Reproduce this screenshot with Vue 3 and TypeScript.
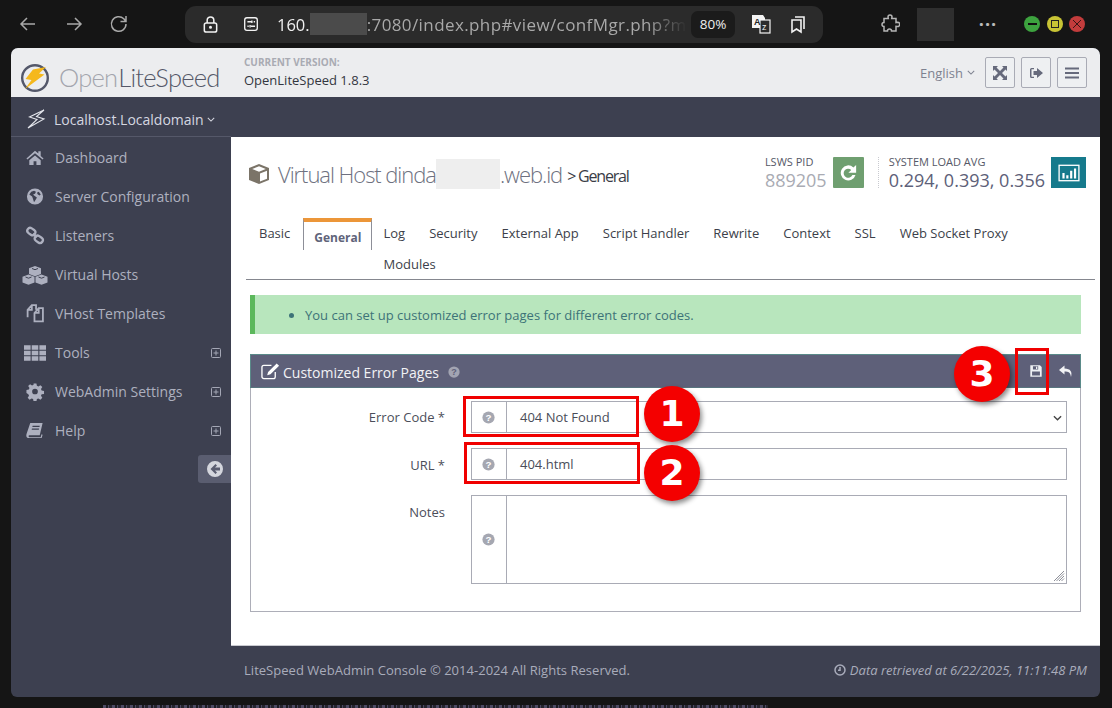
<script setup lang="ts">
interface NavItem { label: string; icon: string; more?: boolean }
const nav: NavItem[] = [
  { label: 'Dashboard', icon: 'home' },
  { label: 'Server Configuration', icon: 'globe' },
  { label: 'Listeners', icon: 'link' },
  { label: 'Virtual Hosts', icon: 'cubes' },
  { label: 'VHost Templates', icon: 'files' },
  { label: 'Tools', icon: 'grid', more: true },
  { label: 'WebAdmin Settings', icon: 'cog', more: true },
  { label: 'Help', icon: 'book', more: true },
]
const tabs = ['Basic', 'General', 'Log', 'Security', 'External App', 'Script Handler', 'Rewrite', 'Context', 'SSL', 'Web Socket Proxy', 'Modules']
</script>

<template>
  <div class="screen">
    <div class="toolbar">
      <svg class="tb back" viewBox="0 0 20 20"><path d="M17 10H3M9 4l-6 6 6 6" /></svg>
      <svg class="tb fwd" viewBox="0 0 20 20"><path d="M3 10h14M11 4l6 6-6 6" /></svg>
      <svg class="tb reload" viewBox="0 0 20 20"><path d="M17 10a7.300 7.300 0 1 1-2.200-5.200L17 7.500M17 2v5.500h-5.500" /></svg>
      <div class="urlbar">
        <svg class="ub lock" viewBox="0 0 20 20"><rect x="3.500" y="8.500" width="13" height="9.500" rx="2" /><path d="M6.500 8.500V5.500a3.500 3.500 0 0 1 7 0v3" /><circle cx="10" cy="13" r=".8" /></svg>
        <svg class="ub site" viewBox="0 0 20 20"><rect x="3" y="3" width="14" height="14" rx="2.500" /><path d="M6 7.500h5M13 7.500h1.500M6 12.500h1.500M10 12.500h4.500M11 6v3M9 11v3" /></svg>
        <div class="url"><span class="host">160.</span><span class="url-hide"></span><span class="path">:7080/index.php#view/confMgr.php?m</span></div>
        <div class="zoom-pill">80%</div>
        <svg class="ub trans" viewBox="0 0 22 22"><path class="solid" d="M2 2h11l2 3v10H2z" /><rect x="10" y="7" width="10" height="13" class="hollow" /><text x="4" y="12" class="ta">A</text><text x="12" y="17" class="tz">z</text></svg>
        <svg class="ub marks" viewBox="0 0 20 20"><path d="M4 6h9v12l-4.500-3L4 18zM7 3h9v12" /></svg>
      </div>
      <svg class="puzzle" viewBox="0 0 20 20"><path d="M8 3a2 2 0 0 1 4 0l-.3 1.500H16v4l1.500-.3a2.200 2.200 0 0 1 0 4.400L16 12.300V17h-4.500a2 2 0 0 0-4 0H4v-4.500a2 2 0 0 1 0-4V4.500h4.300z" /></svg>
      <div class="avatar"></div>
      <div class="dots">···</div>
      <div class="lights">
        <span class="light green"><i class="dash"></i></span>
        <span class="light yellow"><i class="sq"></i></span>
        <span class="light red"><svg viewBox="0 0 16 16"><path d="M4 4l8 8M12 4l-8 8" /></svg></span>
      </div>
    </div>

    <div class="window">
      <header class="head">
        <div class="logo">
          <svg class="logo-mark" viewBox="0 0 30 30">
            <circle cx="15" cy="15" r="12.800" fill="none" stroke="#54586a" stroke-width="2.400" />
            <path d="M13 6.500 26 4l-7 6.500 5.500 1L5 26l6.500-9L5.500 16z" fill="#f5b81c" />
          </svg>
          <span class="logo-text"><span class="open">Open</span><span class="lite">LiteSpeed</span></span>
        </div>
        <div class="version">
          <div class="v-label">CURRENT VERSION:</div>
          <div class="v-value">OpenLiteSpeed 1.8.3</div>
        </div>
        <div class="head-right">
          <span class="lang">English <svg class="chev" viewBox="0 0 10 6"><path d="M1 1l4 4 4-4" /></svg></span>
          <button class="hbtn"><svg viewBox="0 0 16 16"><path d="M1 1h5L4.500 2.500 8 6l3.500-3.500L10 1h5v5l-1.500-1.500L10 8l3.500 3.500L15 10v5h-5l1.500-1.500L8 10l-3.500 3.500L6 15H1v-5l1.500 1.500L6 8 2.500 4.500 1 6z" /></svg></button>
          <button class="hbtn"><svg viewBox="0 0 16 16"><path d="M6 3H3.500A1.500 1.500 0 0 0 2 4.500v7A1.500 1.500 0 0 0 3.500 13H6v-1.300H3.500V4.300H6z" /><path d="M5.500 6H9V3l6 5-6 5v-3H5.500z" /></svg></button>
          <button class="hbtn"><svg viewBox="0 0 16 16"><path d="M1 2.500h14v2H1zM1 7h14v2H1zM1 11.500h14v2H1z" /></svg></button>
        </div>
      </header>

      <div class="brandbar">
        <div class="brand">
          <svg class="brand-ico" viewBox="0 0 20 20"><path d="M18 1 3.500 8l7.500 2.500L2 19l16-9-7.500-2.500z" fill="none" stroke="#e2e4ea" stroke-width="1.100" /></svg>
          <span>Localhost.Localdomain</span>
          <svg class="chev light-chev" viewBox="0 0 10 6"><path d="M1 1l4 4 4-4" /></svg>
        </div>
      </div>

      <div class="main">
        <aside class="side">
          <nav class="nav">
            <div v-for="n in nav" :key="n.label" class="nav-item">
              <span class="nav-ico">
                <svg v-if="n.icon === 'home'" viewBox="0 0 20 20"><path d="M10 3 1 11l1 1.200L10 5.500l8 6.700 1-1.200-3-2.700V3.500h-2.500v2.300zM4 13l6-5 6 5v5h-4.500v-4h-3v4H4z" /></svg>
                <svg v-else-if="n.icon === 'globe'" viewBox="0 0 20 20"><path fill-rule="evenodd" d="M10 1.500a8.500 8.500 0 1 1 0 17 8.500 8.500 0 0 1 0-17zM6 5 4 8l3 2 1 3 1 3 2-3 1-2-3-2-1-1 2-1 1-2-2-1zm8 0-2 1 1 2 2 1 1-1z" /></svg>
                <svg v-else-if="n.icon === 'link'" viewBox="0 0 20 20" class="stroke heavy"><rect x="1.500" y="2.800" width="9" height="6" rx="3" transform="rotate(35 6 6)" /><rect x="9.500" y="11" width="9" height="6" rx="3" transform="rotate(35 14 14)" /><path d="M8 8l4 4" /></svg>
                <svg v-else-if="n.icon === 'cubes'" class="wide" viewBox="0 0 26 20"><path d="m13 1 6 2.300V9l-6 2.300L7 9V3.300z" /><path d="m6.500 9.500 6 2.300v5.700l-6 2.300-6-2.300v-5.700z" /><path d="m19.500 9.500 6 2.300v5.700l-6 2.300-6-2.300v-5.700z" /><path class="cut" d="m10 3.500 3 1.200 3-1.200M3.500 12l3 1.200 3-1.200M16.500 12l3 1.200 3-1.200" /></svg>
                <svg v-else-if="n.icon === 'files'" viewBox="1.500 1.500 17 18" class="stroke"><path d="M3 14V7l4-4.500h4V7M9.500 18V10l4-4.500h4V18zM7 2.500V7H3M13.500 5.500V10h-4" /></svg>
                <svg v-else-if="n.icon === 'grid'" class="grid" viewBox="0 3 20 14"><path d="M0 3h6v4H0zM7 3h6v4H7zM14 3h6v4h-6zM0 8h6v4H0zM7 8h6v4H7zM14 8h6v4h-6zM0 13h6v4H0zM7 13h6v4H7zM14 13h6v4h-6z" /></svg>
                <svg v-else-if="n.icon === 'cog'" viewBox="0 0 20 20"><path fill-rule="evenodd" d="M8.500 1.500h3l.5 2.500 1.600.7 2.100-1.400 2 2-1.400 2.100.7 1.600 2.500.5v3l-2.500.5-.7 1.600 1.400 2.100-2 2-2.100-1.400-1.600.7-.5 2.500h-3l-.5-2.500-1.600-.7-2.100 1.400-2-2 1.400-2.100-.7-1.600L1 11.500v-3l2.500-.5.7-1.600-1.400-2.100 2-2 2.100 1.400 1.600-.7zM10 7a3 3 0 1 0 0 6 3 3 0 0 0 0-6z" /></svg>
                <svg v-else viewBox="0 0 20 20"><path d="M5 2h13l-3 13H4c-1 0-1 2 0 2h12l.8-3 1.200.500-1 3.500H3c-2 0-2.500-2-2-4zm2.500 3-.3 1.300h7.500L15 5zm-.7 3-.3 1.300H14L14.300 8z" /></svg>
              </span>
              <span class="nav-label">{{ n.label }}</span>
              <svg v-if="n.more" class="plus" viewBox="0 0 10 10"><rect x=".5" y=".5" width="9" height="9" rx="1" /><path d="M2.500 5h5M5 2.500v5" /></svg>
            </div>
          </nav>
          <div class="collapse-row">
            <div class="collapse">
              <svg viewBox="0 0 16 16"><path fill-rule="evenodd" d="M8 0a8 8 0 1 1 0 16A8 8 0 0 1 8 0zm.5 3L3.500 8l5 5 1.500-1.500L8 9.500h5v-3H8L10 4.500z" /></svg>
            </div>
          </div>
        </aside>

        <div class="content">
          <section class="body">
            <div class="titlerow">
              <h1 class="title">
                <svg class="cube" viewBox="0 0 22 22"><path d="M11 1 21 5v12l-10 4-10-4V5z" fill="#7b7468" /><path d="M11 3.200 17.800 6 11 8.700 4.200 6z" fill="#fff" /><path d="M12 10.500 19 7.700v8l-7 2.900z" fill="#fff" /></svg>
                <span>Virtual Host dinda</span><span class="title-hide"></span><span>.web.id</span>
                <small>&gt; General</small>
              </h1>
              <div class="stats">
                <div class="stat">
                  <div class="s-label">LSWS PID</div>
                  <div class="s-value pid">889205</div>
                </div>
                <button class="sbtn green"><svg viewBox="0 0 16 16"><path d="M14 9.500A6 6 0 1 1 12.300 3.500L14.500 1.500V7.800H8.300l2.300-2.300A3.600 3.600 0 1 0 11.500 9.500z" /></svg></button>
                <div class="stat load">
                  <div class="s-label">SYSTEM LOAD AVG</div>
                  <div class="s-value">0.294, 0.393, 0.356</div>
                </div>
                <button class="sbtn teal"><svg viewBox="0 0 20 16"><rect x="1" y="1" width="18" height="14" fill="none" stroke="#fff" stroke-width="1.200" /><path d="M4 8h2v5H4zM7.500 10h2v3h-2zM11 6h2v7h-2zM14.500 4h2v9h-2z" /></svg></button>
              </div>
            </div>

            <ul class="tabs">
              <li v-for="t in tabs" :key="t" :class="['tab', { active: t === 'General' }]">{{ t }}</li>
            </ul>

            <div class="alert">
              <ul><li>You can set up customized error pages for different error codes.</li></ul>
            </div>

            <div class="panel">
              <div class="panel-head">
                <svg class="edit" viewBox="0 0 20 18"><path d="M15 10v5a2 2 0 0 1-2 2H3a2 2 0 0 1-2-2V5a2 2 0 0 1 2-2h8" fill="none" stroke="#fff" stroke-width="1.400" /><path d="M16.500 1 19 3.500 10 12.500l-3.500 1 1-3.500z" fill="#fff" /></svg>
                <span class="panel-title">Customized Error Pages</span>
                <svg class="qm head-qm" viewBox="0 0 16 16"><circle cx="8" cy="8" r="7.500" /><text x="8" y="12" class="qm-t">?</text></svg>
                <div class="panel-actions">
                  <svg class="save" viewBox="0 0 16 16"><path fill-rule="evenodd" d="M1.500 1.500h11l2 2v11h-13zm3 1.200v3.600h6V2.700zM8 3.200h1.500v2.500H8zM3.500 8.500v4.700h9V8.500z" /></svg>
                  <svg class="undo" viewBox="0 0 16 16"><path d="M6.500 2.500 1 7l5.500 4.500V8.500c4 0 6 1 6.500 5.500 1.500-5-.5-8.500-6.500-8.500z" /></svg>
                </div>
              </div>
              <div class="panel-body">
                <div class="row">
                  <label class="lbl">Error Code *</label>
                  <div class="field">
                    <span class="addon"><svg class="qm" viewBox="0 0 16 16"><circle cx="8" cy="8" r="7.500" /><text x="8" y="12" class="qm-t">?</text></svg></span>
                    <div class="val select">404 Not Found<svg class="sel-chev" viewBox="0 0 10 6"><path d="M1 1l4 4 4-4" /></svg></div>
                  </div>
                </div>
                <div class="row">
                  <label class="lbl url-lbl">URL *</label>
                  <div class="field">
                    <span class="addon"><svg class="qm" viewBox="0 0 16 16"><circle cx="8" cy="8" r="7.500" /><text x="8" y="12" class="qm-t">?</text></svg></span>
                    <div class="val">404.html</div>
                  </div>
                </div>
                <div class="row tall">
                  <label class="lbl">Notes</label>
                  <div class="field">
                    <span class="addon"><svg class="qm" viewBox="0 0 16 16"><circle cx="8" cy="8" r="7.500" /><text x="8" y="12" class="qm-t">?</text></svg></span>
                    <div class="val area"><svg class="grip" viewBox="0 0 12 12"><path d="M11 1 1 11M11 3.500 3.500 11M11 6 6 11M11 8.500 8.500 11" /></svg></div>
                  </div>
                </div>
              </div>
            </div>
          </section>
          <footer class="foot">
            <span>LiteSpeed WebAdmin Console © 2014-2024 All Rights Reserved.</span>
            <span class="retrieved"><svg viewBox="0 0 12 12"><circle cx="6" cy="6" r="5" /><path d="M6 3v3.200H4" /></svg>Data retrieved at 6/22/2025, 11:11:48 PM</span>
          </footer>
        </div>
      </div>
    </div>

    <div class="under"></div>
    <div class="mark box1"></div>
    <div class="mark box2"></div>
    <div class="mark box3"></div>
    <div class="badge b1">1</div>
    <div class="badge b2">2</div>
    <div class="badge b3">3</div>
  </div>
</template>

<style scoped>
.screen { position: relative; width: 1112px; height: 708px; overflow: hidden; background: #151515; font-family: "Open Sans", "Noto Sans", sans-serif; }
.toolbar { height: 48px; display: flex; align-items: center; color: #bbb; }
.tb { width: 20px; height: 20px; fill: none; stroke: #a9a9a9; stroke-width: 1.500; flex: none; }
.back { margin-left: 18px; }
.fwd { margin-left: 26px; }
.reload { margin-left: 25px; }
.urlbar { margin-left: 56px; width: 638px; height: 37px; border-radius: 11px; background: #2b2b2b; display: flex; align-items: center; }
.ub { flex: none; fill: none; stroke: #f2f2f2; stroke-width: 1.600; }
.lock { width: 19px; height: 19px; margin-left: 16px; }
.site { width: 18px; height: 18px; margin-left: 22px; stroke-width: 1.500; }
.url { margin-left: 17px; width: 410px; white-space: nowrap; overflow: hidden; font-size: 16.500px; color: #a8a8a8; display: flex; align-items: center; -webkit-mask-image: linear-gradient(90deg, #000 90%, transparent 100%); mask-image: linear-gradient(90deg, #000 90%, transparent 100%); }
.path { font-size: 17px; letter-spacing: .4px; }
.host { color: #f0f0f0; }
.url-hide { flex: none; width: 57px; height: 22px; background: #4b4b4b; }
.zoom-pill { margin-left: 4px; width: 44px; height: 27px; border-radius: 7px; background: #1b1b1b; color: #eee; font-size: 13.500px; display: flex; align-items: center; justify-content: center; flex: none; }
.trans { width: 22px; height: 22px; margin-left: 15px; stroke: none; }
.trans .solid { fill: #f4f4f4; }
.trans .hollow { fill: #2b2b2b; stroke: #f4f4f4; stroke-width: 1.200; }
.ta { font-size: 9px; font-weight: 700; fill: #222; stroke: none; font-family: "Liberation Sans", sans-serif; }
.tz { font-size: 9px; fill: #eee; stroke: none; font-family: "Liberation Sans", sans-serif; }
.marks { width: 20px; height: 20px; margin-left: 16px; }
.puzzle { width: 20px; height: 20px; margin-left: 57px; fill: none; stroke: #b5b5b5; stroke-width: 1.500; flex: none; }
.avatar { width: 37px; height: 33px; margin-left: 17px; background: #2f2f2f; flex: none; }
.dots { width: 24px; margin-left: 22px; font-size: 18px; letter-spacing: 1px; color: #bbb; font-weight: 700; text-align: center; flex: none; }
.lights { margin-left: 24px; display: flex; gap: 6.500px; flex: none; }
.light { width: 16px; height: 16px; border-radius: 50%; display: flex; align-items: center; justify-content: center; }
.green { background: #3da33f; }
.yellow { background: #c8c435; }
.red { background: #c23c3c; }
.dash { width: 9px; height: 1.500px; background: #111; }
.sq { width: 8px; height: 8px; border: 1.500px solid #222; box-sizing: border-box; }
.red svg { width: 16px; height: 16px; fill: none; stroke: #3a1515; stroke-width: 1; }

.window { margin: 0 12px 0 11px; height: 649px; border-radius: 7px 7px 6px 6px; overflow: hidden; background: #3d4050; display: flex; flex-direction: column; }
.head { height: 49px; background: #ecedef; display: flex; align-items: center; flex: none; }
.logo { display: flex; align-items: center; width: 233px; flex: none; padding-left: 9px; box-sizing: border-box; margin-top: 11px; }
.logo-mark { width: 30px; height: 30px; flex: none; }
.logo-text { margin-left: 9px; font-family: Lato, sans-serif; font-size: 25.500px; font-weight: 300; letter-spacing: -.75px; line-height: 1; white-space: nowrap; }
.open { color: #a3a5ad; margin-right: 1px; }
.lite { color: #555868; }
.version { flex: none; margin-top: -1px; }
.v-label { font-size: 10px; font-weight: 700; line-height: 14px; color: #a9abb3; }
.v-value { font-size: 13px; line-height: 18px; margin-top: 2px; color: #33363f; }
.head-right { margin-left: auto; margin-right: 13px; display: flex; align-items: center; }
.lang { font-size: 13px; color: #7e8290; display: flex; align-items: center; margin-right: 10px; gap: 4px; }
.chev { width: 8px; height: 5px; fill: none; stroke: #7e8290; stroke-width: 1.300; }
.hbtn { width: 30px; height: 31px; margin-left: 6px; padding: 0; border: 1px solid #a9abb5; border-radius: 2px; background: #eef0f2; display: flex; align-items: center; justify-content: center; }
.hbtn:first-of-type { margin-left: 0; }
.hbtn svg { width: 16px; height: 16px; fill: #666a7c; }

.brandbar { height: 40px; flex: none; }
.brand { width: 220px; height: 40px; box-sizing: border-box; padding: 5px 0 0 15px; border-bottom: 1px solid #555869; display: flex; align-items: center; color: #d5d7e0; font-size: 14px; }
.brand-ico { width: 20px; height: 22px; margin-right: 8px; flex: none; }
.light-chev { margin-left: 3px; stroke: #d5d7e0; }

.main { flex: 1; display: flex; min-height: 0; }
.side { width: 220px; flex: none; }
.nav { padding-top: 1px; }
.nav-item { height: 39px; display: flex; align-items: center; color: #adb0bf; font-size: 14px; position: relative; }
.nav-ico { width: 44px; flex: none; display: flex; justify-content: center; padding-left: 3px; box-sizing: border-box; }
.nav-ico svg { height: 19px; width: 20px; fill: #adb0bf; }
.nav-ico svg.wide { height: 20px; width: 26px; }
.nav-ico svg.grid { height: 16px; width: 22px; }
.nav-ico svg.stroke { fill: none; stroke: #adb0bf; stroke-width: 1.700; }
.nav-ico svg.heavy { stroke-width: 2.400; }
.nav-ico .cut { fill: none; stroke: #3d4050; stroke-width: 1; }
.nav-label { flex: 1; }
.plus { width: 10px; height: 10px; margin-right: 10px; fill: none; stroke: #a4a7b5; stroke-width: 1; }
.collapse-row { display: flex; justify-content: flex-end; margin-top: 5px; }
.collapse { width: 33px; height: 28px; background: #5a5d70; border-radius: 3px 0 0 3px; display: flex; align-items: center; justify-content: center; }
.collapse svg { width: 16px; height: 16px; fill: #d4d6dd; }

.content { flex: 1; display: flex; flex-direction: column; min-width: 0; }
.body { height: 509px; flex: none; background: #fff; border-bottom: 1px solid #c9cad0; box-sizing: border-box; padding: 0 14px 0 15px; }
.titlerow { height: 81px; display: flex; box-sizing: border-box; padding: 20px 0 0 2px; }
.title { margin: 0; height: 34px; display: flex; align-items: center; font-size: 22px; font-weight: 300; color: #6e7180; letter-spacing: -1.05px; white-space: nowrap; }
.cube { width: 22px; height: 22px; margin-right: 8px; flex: none; }
.title-hide { width: 64px; height: 30px; background: #eeeeee; flex: none; }
.title small { font-size: 16px; font-weight: 400; color: #3a3c46; letter-spacing: -1.2px; margin-left: 5px; margin-top: 3px; }
.stats { margin-left: auto; display: flex; align-items: flex-start; }
.stat { margin-right: 6px; }
.s-label { font-size: 11px; line-height: 13px; margin-top: -2px; color: #555866; }
.s-value { font-size: 18px; line-height: 24px; color: #5d6078; white-space: nowrap; }
.pid { color: #a9abb3; }
.sbtn { width: 31px; height: 31px; padding: 0; border: none; display: flex; align-items: center; justify-content: center; flex: none; }
.green.sbtn { background: #6f9f70; border-radius: 1px; }
.sbtn svg { width: 20px; height: 20px; fill: #fff; }
.teal.sbtn { background: #167a8c; width: 35px; }
.teal.sbtn svg { width: 22px; height: 18px; }
.load { border-left: 1px dotted #c9cad0; margin-left: 14px; padding-left: 10px; height: 31px; }

.tabs { display: flow-root; margin: 0 -9px 0 0; list-style: none; padding: 0 0 0 1px; height: 62px; box-sizing: border-box; border-bottom: 1px solid #85878f; }
.tab { float: left; padding: 6px 12px 7px; font-size: 13px; line-height: 18px; color: #3c3f4a; }
.tab:first-child { padding-right: 13px; }
.tab.active { border: 1px solid #8d8f98; border-top: 4px solid #ec9639; border-bottom: none; padding: 7px 10px 3px; margin-right: -1px; font-weight: 700; font-size: 12px; color: #60647a; background: #fff; }
.alert { margin: 15px 5px 0 4px; height: 39px; box-sizing: border-box; background: #b8e6bd; border-left: 5px solid #5cb85c; color: #3d7378; font-size: 13px; display: flex; align-items: center; }
.alert ul { margin: 0; padding-left: 50px; }
.panel { margin: 20px 5px 0 4px; height: 258px; box-sizing: border-box; border: 1px solid #adaeb8; border-top: none; }
.panel-head { height: 34px; margin: 0 -1px; background: #5e6079; border: 1px solid #5a8a89; border-bottom-color: #58757f; box-sizing: border-box; display: flex; align-items: center; padding: 0 6px 0 10px; color: #f2f2f5; font-size: 14px; }
.edit { width: 19px; height: 18px; flex: none; margin-right: 3px; }
.panel-title { font-size: 14px; padding-top: 2px; }
.qm { width: 13px; height: 13px; fill: #a5a7b1; }
.qm-t { font-family: "Liberation Sans", sans-serif; font-size: 12px; font-weight: 700; fill: #fff; text-anchor: middle; }
.head-qm { margin-left: 9px; margin-top: 1px; fill: #a2a4b2; width: 12px; height: 12px; }
.head-qm .qm-t { fill: #5e6079; }
.panel-actions { margin-left: auto; display: flex; align-items: center; gap: 15px; }
.save { width: 14px; height: 14px; fill: #eef0f4; }
.undo { width: 16px; height: 16px; fill: #f2f2f5; }
.panel-body { padding: 13px 13px 0 0; }
.row { display: flex; height: 32px; margin-bottom: 15px; }
.row.tall { height: 89px; }
.lbl { width: 194px; flex: none; text-align: right; font-size: 13px; line-height: 32px; color: #4b4e5a; }
.url-lbl { line-height: 34px; }
.tall .lbl { line-height: 34px; }
.field { margin-left: 26px; flex: 1; display: flex; border: 1px solid #a9abb5; box-sizing: border-box; }
.addon { width: 35px; flex: none; border-right: 1px solid #a9abb5; display: flex; align-items: center; justify-content: center; padding-right: 2px; box-sizing: border-box; }
.val { flex: 1; padding-left: 13px; font-size: 13px; line-height: 30px; color: #4a4d59; position: relative; }
.sel-chev { position: absolute; right: 4px; top: 13px; width: 9px; height: 6px; fill: none; stroke: #444; stroke-width: 1.500; }
.grip { position: absolute; right: 1px; bottom: 1px; width: 12px; height: 12px; fill: none; stroke: #8d8f98; stroke-width: 1; }
.foot { flex: 1; display: flex; align-items: center; justify-content: space-between; padding: 0 13px 4px 13px; font-size: 13px; color: #a9acbb; letter-spacing: .03px; }
.retrieved { display: flex; align-items: center; font-style: italic; font-size: 13px; letter-spacing: 0; }
.retrieved svg { width: 12px; height: 12px; margin-right: 4px; fill: none; stroke: #a9acbb; stroke-width: 1.500; }

.under { position: absolute; left: 103px; top: 705px; width: 665px; height: 3px; background: repeating-linear-gradient(90deg, #4d4a63 0 3px, #1c1c22 3px 5px, #4d4a63 5px 6px, #26252e 6px 9px); }
.mark { position: absolute; border: 3px solid #f00000; box-sizing: border-box; pointer-events: none; }
.box1 { left: 463px; top: 396px; width: 176px; height: 41px; }
.box2 { left: 464px; top: 442px; width: 176px; height: 42px; }
.box3 { left: 1015px; top: 348px; width: 34px; height: 47px; }
.badge { position: absolute; width: 56px; height: 56px; border-radius: 50%; background: #f40000; color: #fff; font-family: "DejaVu Sans", sans-serif; font-weight: 700; font-size: 36px; line-height: 56px; text-align: center; box-shadow: 2px 3px 5px rgba(0, 0, 0, .45); }
.b1 { left: 644px; top: 386px; }
.b2 { left: 644px; top: 445px; }
.b3 { left: 954px; top: 346px; }
</style>
